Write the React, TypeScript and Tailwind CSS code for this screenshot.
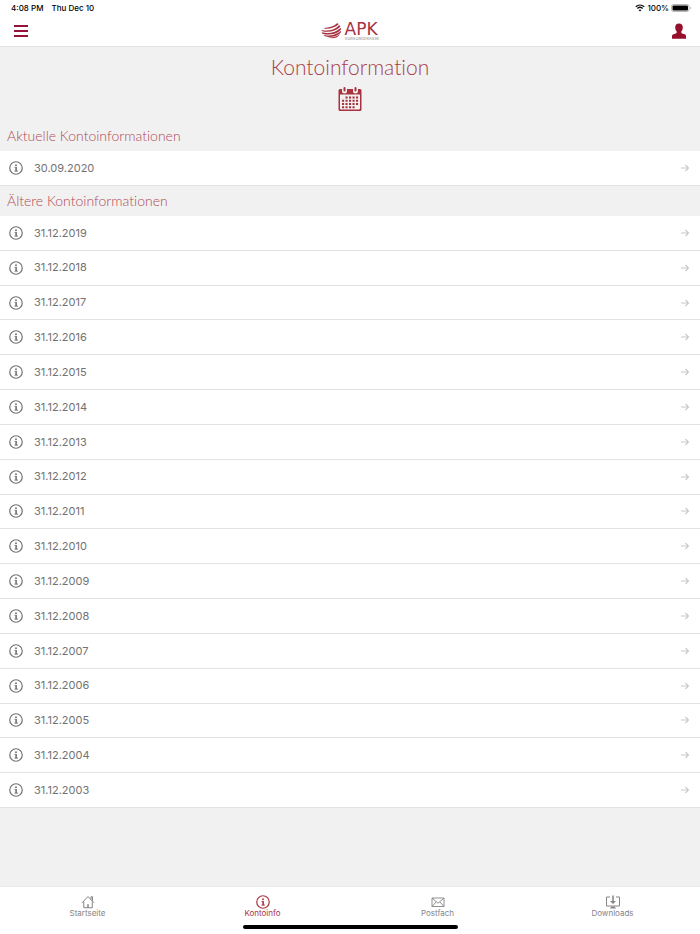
import { useState } from 'react';
import clsx from 'clsx';

const CURRENT = ['30.09.2020'];

const OLDER = [
  '31.12.2019',
  '31.12.2018',
  '31.12.2017',
  '31.12.2016',
  '31.12.2015',
  '31.12.2014',
  '31.12.2013',
  '31.12.2012',
  '31.12.2011',
  '31.12.2010',
  '31.12.2009',
  '31.12.2008',
  '31.12.2007',
  '31.12.2006',
  '31.12.2005',
  '31.12.2004',
  '31.12.2003',
];

const TABS = [
  { id: 'home', label: 'Startseite', Icon: HomeIcon },
  { id: 'info', label: 'Kontoinfo', Icon: InfoIcon },
  { id: 'mail', label: 'Postfach', Icon: MailIcon },
  { id: 'downloads', label: 'Downloads', Icon: DownloadIcon },
];

interface IconProps {
  className?: string;
}

export default function App() {
  const [activeTab, setActiveTab] = useState('info');

  return (
    <div className="flex min-h-screen flex-col bg-[#f1f1f1] font-['Inter','Liberation_Sans',sans-serif]">
      <StatusBar />
      <Header />

      <main className="flex-1">
        <div className="flex flex-col items-center pt-1 pb-2.5">
          <h1 className="font-['Lato',sans-serif] text-[21px] leading-8 font-light text-[#a93f4a] [font-variant-ligatures:none]">
            Kontoinformation
          </h1>
          <CalendarIcon className="mt-1 h-6 w-6 text-[#a8323f]" />
        </div>
        <Section
          title="Aktuelle Kontoinformationen"
          dates={CURRENT}
          listClassName="min-h-[35px]"
        />
        <Section
          title="Ältere Kontoinformationen"
          dates={OLDER}
          listClassName="min-h-[592px]"
        />
      </main>

      <nav className="sticky bottom-0 border-t border-[#ebebeb] bg-white pb-[5px]">
        <div className="grid grid-cols-4 pt-2">
          {TABS.map(({ id, label, Icon }) => (
            <button
              key={id}
              type="button"
              onClick={() => setActiveTab(id)}
              className={clsx(
                'flex flex-col items-center text-[8px] leading-2',
                activeTab === id ? 'text-[#a8323f]' : 'text-[#858585]'
              )}
            >
              <Icon className="h-3.5 w-3.5" />
              <span>{label}</span>
            </button>
          ))}
        </div>
        <div className="mx-auto mt-2 h-1 w-[215px] rounded-full bg-black" />
      </nav>
    </div>
  );
}

function StatusBar() {
  return (
    <div className="flex h-4 items-center justify-between bg-white pr-[9px] pl-[11px] text-[8px] font-medium text-black">
      <div className="flex gap-2">
        <span>4:08 PM</span>
        <span>Thu Dec 10</span>
      </div>
      <div className="flex items-center gap-0.5">
        <WifiIcon className="h-2 w-2.5" />
        <span>100%</span>
        <BatteryIcon className="h-2 w-5" />
      </div>
    </div>
  );
}

function Header() {
  return (
    <header className="grid h-[31px] grid-cols-3 items-center border-b border-[#e2e2e2] bg-white px-3.5">
      <button type="button" aria-label="Menü" className="w-fit">
        <svg viewBox="0 0 14 12" className="h-3 w-3.5" stroke="#96143a" strokeWidth="2">
          <path d="M0 1h14M0 6h14M0 11h14" />
        </svg>
      </button>
      <div className="flex items-center justify-center gap-1">
        <LogoMark className="h-4 w-5" />
        <div className="flex flex-col text-[#a8323f]">
          <span className="font-['DejaVu_Sans',sans-serif] text-[17px] leading-4">APK</span>
          <span className="text-[4px] leading-1 text-[#8a8a8a]">VORSORGEKASSE</span>
        </div>
      </div>
      <button type="button" aria-label="Profil" className="ml-auto w-fit">
        <svg viewBox="0 0 14 16" className="h-4 w-3.5" fill="#96102c">
          <path d="M7 .5c2.5 0 3.8 1.5 3.8 3.9 0 1.8-.7 3.1-1.5 4v1.2c0 .5.3.7.8.9l2.4.8c1 .4 1.5 1 1.5 2v2.4H0v-2.4c0-1 .5-1.6 1.5-2l2.4-.8c.5-.2.8-.4.8-.9V8.4c-.8-.9-1.5-2.2-1.5-4C3.2 2 4.5.5 7 .5z" />
        </svg>
      </button>
    </header>
  );
}

interface SectionProps {
  title: string;
  dates: string[];
  listClassName?: string;
}

function Section({ title, dates, listClassName }: SectionProps) {
  return (
    <section>
      <h2 className="px-[7px] py-1 font-['Lato',sans-serif] text-sm leading-[22px] font-light text-[#b04a55] [font-variant-ligatures:none]">
        {title}
      </h2>
      <ul className={clsx('grid auto-rows-fr bg-white', listClassName)}>
        {dates.map((date) => (
          <li key={date} className="flex border-b border-[#e2e2e2]">
            <a
              href="#"
              className="flex min-h-8 flex-1 items-center pr-[11px] pl-[9px] text-[11px] text-[#727272]"
            >
              <InfoIcon className="h-3.5 w-3.5" />
              <span className="ml-[11px] flex-1">{date}</span>
              <ArrowIcon className="h-2 w-2 text-[#c8c8cc]" />
            </a>
          </li>
        ))}
      </ul>
    </section>
  );
}

function InfoIcon({ className }: IconProps) {
  return (
    <svg viewBox="0 0 28 28" className={className} fill="none" stroke="currentColor">
      <circle cx="14" cy="14" r="12.5" strokeWidth="2.4" />
      <circle cx="14" cy="8.5" r="1.9" fill="currentColor" stroke="none" />
      <path d="M11 12.8h2M11 20.2h7" strokeWidth="1.8" />
      <path d="M14.2 12v8.5" strokeWidth="3.2" />
    </svg>
  );
}

function ArrowIcon({ className }: IconProps) {
  return (
    <svg viewBox="0 0 16 16" className={className} fill="none" stroke="currentColor" strokeWidth="2.2">
      <path d="M0 8h14.5M9 2l6 6-6 6" />
    </svg>
  );
}

function HomeIcon({ className }: IconProps) {
  return (
    <svg viewBox="0 0 28 28" className={className} fill="none" stroke="currentColor" strokeWidth="2">
      <path d="M2 15.5 14 3l12 12.5M5.5 13v12.5h17V13M20 9V3.5h3V12" />
      <path d="M14 25.5v-7" strokeWidth="3" />
    </svg>
  );
}

function MailIcon({ className }: IconProps) {
  return (
    <svg viewBox="0 0 28 28" className={className} fill="none" stroke="currentColor" strokeWidth="1.8">
      <path d="M2 6h24v17H2zM2 6l12 10.5L26 6M2 23l8.5-9.5M26 23l-8.5-9.5" />
    </svg>
  );
}

function DownloadIcon({ className }: IconProps) {
  return (
    <svg viewBox="0 0 28 28" className={className} fill="none" stroke="currentColor" strokeWidth="2">
      <path d="M8 4H1v18h26V4h-7" />
      <path d="M14 1v14" strokeWidth="3" />
      <path d="M8 12h12l-6 6zM10 23h8v2.5h2V27H8v-1.5h2z" fill="currentColor" stroke="none" />
    </svg>
  );
}

function CalendarIcon({ className }: IconProps) {
  const dots: [number, number][] = [];
  for (let row = 0; row < 4; row++) {
    for (let col = 0; col < 5; col++) {
      // first day starts on the second column, last one ends on the fourth
      if ((row === 0 && col === 0) || (row === 3 && col === 4)) continue;
      dots.push([8 + col * 7, 19 + row * 6.5]);
    }
  }

  return (
    <svg viewBox="0 0 48 48" className={className} fill="currentColor">
      <path
        fillRule="evenodd"
        d="M4 4h4v4a5 5 0 0 0 10 0V4h12v4a5 5 0 0 0 10 0V4h4a3 3 0 0 1 3 3v38a3 3 0 0 1-3 3H4a3 3 0 0 1-3-3V7a3 3 0 0 1 3-3zm0 11v28a2 2 0 0 0 2 2h36a2 2 0 0 0 2-2V15z"
      />
      <rect x="11" y="0" width="4" height="9" rx="2" />
      <rect x="33" y="0" width="4" height="9" rx="2" />
      {dots.map(([x, y]) => (
        <rect key={`${x}-${y}`} x={x} y={y} width="4.2" height="4" />
      ))}
    </svg>
  );
}

function LogoMark({ className }: IconProps) {
  return (
    <svg viewBox="0 0 60 48" className={className} fill="#a8323f">
      <path d="M12 14c12 1 26-3 36-13 2 0 4 1 5 3C42 14 26 19 9 17z" />
      <path d="M2 21c20 5 40-1 53-15l3 5C44 25 22 30 2 24z" />
      <path d="M2 28c22 6 44 0 57-14l1 6C46 34 24 38 4 32z" />
      <path d="M7 36c20 4 40-1 53-13l-1 6C46 41 28 44 12 40z" />
      <path d="M18 43c16 2 29-2 40-10-7 11-22 17-40 10z" />
    </svg>
  );
}

function WifiIcon({ className }: IconProps) {
  return (
    <svg viewBox="0 0 20 16" className={className} fill="none" stroke="#111" strokeWidth="2.6">
      <path d="M1.5 5.5c5-4.6 12-4.6 17 0M4.8 9c3-2.8 7.4-2.8 10.4 0" />
      <path d="M10 15 7 12c1.8-1.5 4.2-1.5 6 0z" fill="#111" stroke="none" />
    </svg>
  );
}

function BatteryIcon({ className }: IconProps) {
  return (
    <svg viewBox="0 0 40 16" className={className}>
      <rect x="1" y="1" width="35" height="14" rx="4" fill="none" stroke="#a0a0a0" strokeWidth="1.5" />
      <rect x="3" y="3" width="31" height="10" rx="2" fill="#000" />
      <path d="M38 5.5c2 .8 2 4.2 0 5z" fill="#a0a0a0" />
    </svg>
  );
}
